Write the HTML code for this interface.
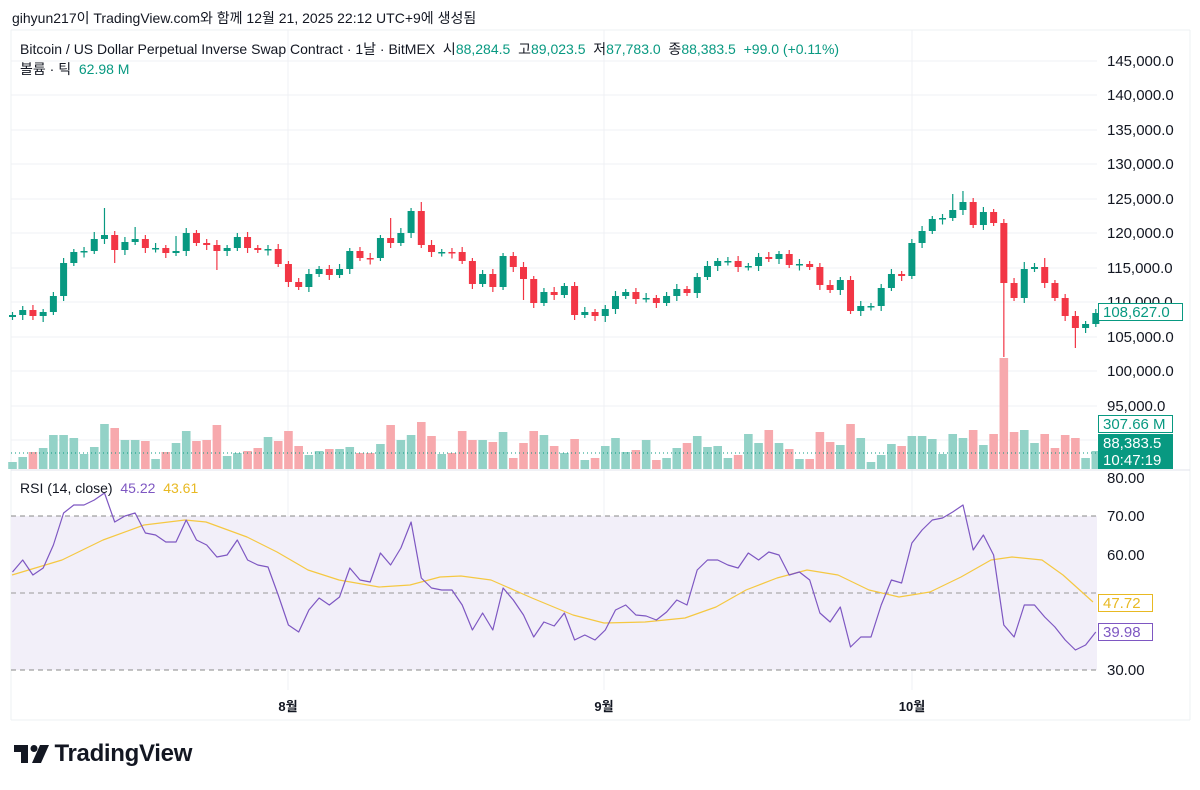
<!DOCTYPE html>
<html><head><meta charset="utf-8">
<style>
body{margin:0;width:1200px;height:790px;background:#fff;overflow:hidden;font-family:"Liberation Sans","Noto Sans CJK KR",sans-serif;color:#131722}
.t{position:absolute;white-space:nowrap}
</style></head><body>
<svg id="s" width="1200" height="790" style="position:absolute;left:0;top:0"></svg>
<div class="t" style="left:12px;top:8px;font-size:14px;">gihyun217이 TradingView.com와 함께 12월 21, 2025 22:12 UTC+9에 생성됨</div>
<div class="t" style="left:20px;top:39px;font-size:14px;">Bitcoin / US Dollar Perpetual Inverse Swap Contract · 1날 · BitMEX &nbsp;시<span style="color:#089981">88,284.5</span> &nbsp;고<span style="color:#089981">89,023.5</span> &nbsp;저<span style="color:#089981">87,783.0</span> &nbsp;종<span style="color:#089981">88,383.5</span> <span style="color:#089981">&nbsp;+99.0 (+0.11%)</span></div>
<div class="t" style="left:20px;top:59px;font-size:14px;">볼륨 · 틱 &nbsp;<span style="color:#089981">62.98 M</span></div>
<div class="t" style="left:20px;top:480px;font-size:14px;">RSI (14, close) &nbsp;<span style="color:#7e57c2">45.22</span> &nbsp;<span style="color:#e8b923">43.61</span></div>
<div class="t" style="left:14px;top:740px;">
<svg width="36" height="28" viewBox="0 0 36 28" style="vertical-align:middle"><path d="M0 5h14v18H7V12H0z" fill="#131722"/><circle cx="20" cy="8.5" r="3.5" fill="#131722"/><path d="M26 5h9l-8 18h-9z" fill="#131722"/></svg>
<span style="font-size:24px;font-weight:bold;vertical-align:middle;letter-spacing:-0.3px;">TradingView</span></div>
<script>
(function(){
var S=document.getElementById('s'),h='';
function L(x1,y1,x2,y2,c,w,d){h+='<line x1="'+x1+'" y1="'+y1+'" x2="'+x2+'" y2="'+y2+'" stroke="'+c+'" stroke-width="'+(w||1)+'"'+(d?' stroke-dasharray="'+d+'"':'')+'/>';}
function R(x,y,w,hh,f,st){h+='<rect x="'+x+'" y="'+y+'" width="'+w+'" height="'+hh+'" fill="'+f+'"'+(st?' stroke="'+st+'"':'')+'/>';}
function T(x,y,s,c,sz,a,b){h+='<text x="'+x+'" y="'+y+'" fill="'+c+'" font-size="'+(sz||14)+'"'+(b?' font-weight="bold"':'')+' font-family="Liberation Sans,Noto Sans CJK KR,sans-serif"'+(a?' text-anchor="'+a+'"':'')+'>'+s+'</text>';}
L(11,30,1190,30,'#eef0f3');L(11,720,1190,720,'#eef0f3');L(11,30,11,720,'#eef0f3');L(1190,30,1190,720,'#eef0f3');
var py=[61,95,130,164,199,233,268,302,337,371,406,440];
py.forEach(function(y){L(11,y,1097,y,'#eff1f4');});
[288,604,912].forEach(function(x){L(x,30,x,690,'#eff1f4');});
L(11,470,1190,470,'#e0e3eb');
R(11,516,1086,154,'#f2eff9');
L(11,516,1097,516,'#888',1,'5,4');L(11,593,1097,593,'#999',1,'5,4');L(11,670,1097,670,'#888',1,'5,4');
var C=[315,310,316,312,296,263,252,251,239,235,250,242,239,248,248,253,251,233,243,245,251,248,237,248,250,249,264,282,287,274,269,275,269,251,258,258,238,243,233,211,245,252,252,252,261,284,274,287,256,267,279,303,292,295,286,315,312,316,309,296,292,299,298,303,296,289,293,277,266,261,261,267,266,257,259,254,265,264,267,285,290,280,311,306,306,288,274,276,243,231,219,218,210,202,225,212,223,283,298,269,267,283,298,316,328,324,313];
var V=[7,12,17,21,34,34,31,15,22,45,41,29,29,28,10,17,26,38,28,29,44,13,16,18,21,32,28,38,23,14,18,20,20,22,16,16,25,44,29,34,47,33,15,16,38,29,29,27,37,11,26,38,34,23,16,30,9,11,23,31,17,19,29,9,11,21,26,33,22,23,11,14,35,26,39,26,20,10,10,37,27,24,45,31,7,14,25,23,33,33,30,15,35,31,39,24,35,111,37,39,26,35,21,34,31,11,18];
var HI={9:208,12:227,16:236,37:218,40:202,92:194,93:191,8:232,99:262,101:258};
var LO={10:263,20:270,50:300,97:357,104:348,3:322,55:320,58:322,2:320};
for(var i=0;i<C.length;i++){
 var x=12.5+i*10.22,o=i?C[i-1]:317,c=C[i];
 var up=c<o||(c==o&&i%2==0),col=up?'#089981':'#f23645',vc=up?'#93d2c7':'#f7a9ad';
 var bt=Math.min(o,c),bb=Math.max(o,c);if(bb-bt<1.5){bb=bt+1.5;}
 var hi=HI[i]||(bt-3-(i%3)),lo=LO[i]||(bb+3+(i%2)*2);
 var vh=V[i]||10; R(x-4.3,469-vh,8.6,vh,vc);
 L(x,hi,x,lo,col,1.2);R(x-3.5,bt,7,bb-bt,col);
}
L(11,453,1097,453,'#089981',1,'1,3');
var RS=[572,560,575,568,545,513,505,505,500,493,522,516,513,533,535,542,542,520,540,545,557,555,540,560,565,567,595,625,632,610,598,605,597,568,580,582,553,565,548,522,578,588,590,590,605,630,613,630,588,600,615,637,622,626,613,640,635,640,630,610,605,615,616,620,612,600,605,570,560,560,565,568,553,560,552,555,575,572,580,613,622,607,647,637,637,605,580,583,543,530,520,518,512,505,550,535,555,625,637,605,605,617,627,640,650,645,632];
var p='';RS.forEach(function(y,i){p+=(i?'L':'M')+(12.5+i*10.22).toFixed(1)+' '+y;});
var MA=[[12,575],[62,560],[103,540],[144,525],[185,520],[206,522],[247,537],[277,552],[308,570],[339,580],[379,587],[410,585],[440,577],[461,576],[491,580],[532,598],[573,615],[604,623],[645,622],[685,618],[716,607],[746,590],[777,578],[807,570],[838,575],[869,590],[899,597],[930,592],[961,577],[991,560],[1012,557],[1042,560],[1063,575],[1093,602]];
var q='';MA.forEach(function(a,i){q+=(i?'L':'M')+a[0]+' '+a[1];});
h+='<path d="'+q+'" fill="none" stroke="#f5c842" stroke-width="1.2" stroke-linejoin="round"/>';
h+='<path d="'+p+'" fill="none" stroke="#7e57c2" stroke-width="1.2" stroke-linejoin="round"/>';
var lab=['145,000.0','140,000.0','135,000.0','130,000.0','125,000.0','120,000.0','115,000.0','110,000.0','105,000.0','100,000.0','95,000.0'];
lab.forEach(function(s,i){T(1107,py[i]+5,s,'#131722',15);});
[['80.00',478],['70.00',516],['60.00',555],['30.00',670]].forEach(function(a){T(1107,a[1]+5,a[0],'#131722',15);});
R(1098.5,303.5,84,17,'#fff','#089981');T(1103,317,'108,627.0','#089981',15);
R(1098.5,415.5,74,17,'#fff','#089981');T(1103,429,'307.66 M','#089981',15);
R(1098,434,75,35,'#089981');T(1103,448,'88,383.5','#fff',15);T(1103,465,'10:47:19','#fff',15);
R(1098.5,594.5,54,17,'#fff','#e8b923');T(1103,608,'47.72','#e8b923',15);
R(1098.5,623.5,54,17,'#fff','#7e57c2');T(1103,637,'39.98','#7e57c2',15);
T(288,711,'8월','#131722',13,'middle',1);T(604,711,'9월','#131722',13,'middle',1);T(912,711,'10월','#131722',13,'middle',1);
S.innerHTML=h;
})();
</script>
</body></html>
